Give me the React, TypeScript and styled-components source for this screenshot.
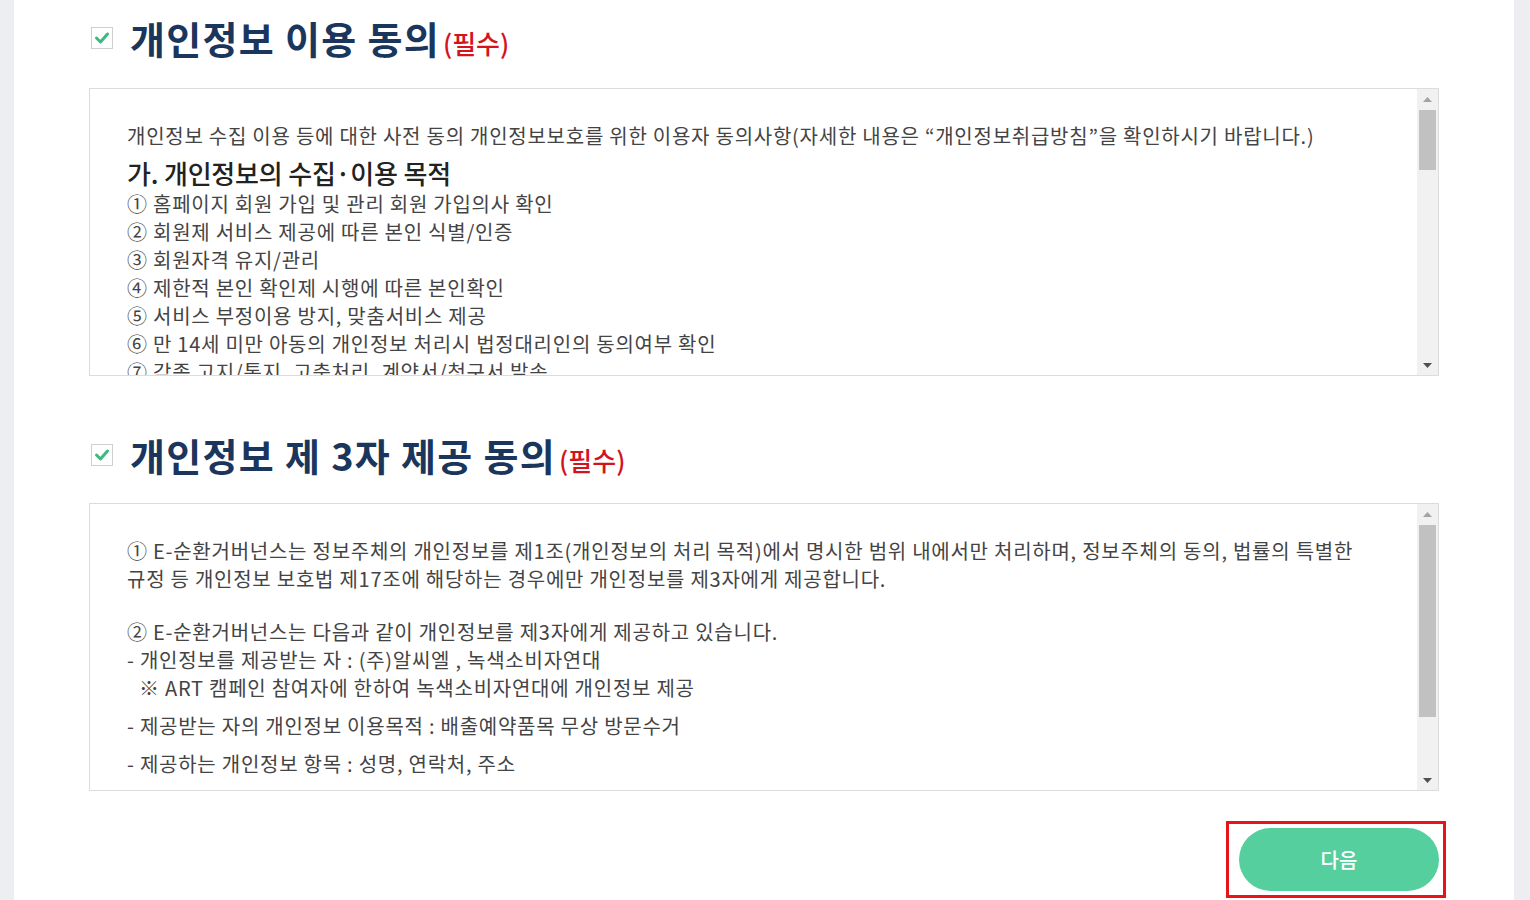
import React from "react";
import styled, { createGlobalStyle } from "styled-components";

const Global = createGlobalStyle`
  html, body { margin: 0; padding: 0; }
  body {
    background: #eceef2;
    font-family: "Noto Sans CJK KR", "Noto Sans", sans-serif;
    overflow: hidden;
  }
`;

const Page = styled.div`
  width: 1500px;
  margin-left: 14px;
  min-height: 100vh;
  background: #ffffff;
`;

const Container = styled.div`
  width: 1350px;
  margin-left: 75px;
  display: flex;
  flex-direction: column;
`;

const TitleRow = styled.div<{ $top: number; $bottom: number }>`
  display: flex;
  align-items: center;
  height: 76px;
  margin-top: ${(p) => p.$top}px;
  margin-bottom: ${(p) => p.$bottom}px;
`;

const CheckBox = styled.span`
  width: 22px;
  height: 22px;
  box-sizing: border-box;
  border: 1px solid #cfcfcf;
  background: #fff;
  display: flex;
  align-items: center;
  justify-content: center;
  margin-left: 2px;
  margin-right: 17px;
`;

const Title = styled.h2`
  margin: 0;
  display: flex;
  align-items: baseline;
  gap: 3px;
  font-size: 38px;
  font-weight: 700;
  color: #1b365d;
  line-height: 1;
  letter-spacing: 1.3px;
`;

const Required = styled.span`
  font-size: 26px;
  font-weight: 500;
  color: #d4141c;
  letter-spacing: 0;
`;

const Box = styled.div`
  height: 288px;
  box-sizing: border-box;
  border: 1px solid #dcdcdc;
  display: flex;
`;

const Content = styled.div`
  flex: 1;
  overflow: hidden;
  padding: 33px 20px 0 37px;
  color: #444;
  font-size: 20px;
  line-height: 28px;
  letter-spacing: 0.75px;
`;

const ScrollBar = styled.div`
  width: 21px;
  flex: none;
  background: #f1f1f1;
  display: flex;
  flex-direction: column;
`;

const ArrowButton = styled.div`
  height: 20px;
  flex: none;
  display: flex;
  align-items: center;
  justify-content: center;
`;

const Track = styled.div`
  flex: 1;
  display: flex;
  flex-direction: column;
  padding: 0 2px;
`;

const Thumb = styled.div<{ $offset: number; $size: number }>`
  margin-top: ${(p) => p.$offset}px;
  height: ${(p) => p.$size}px;
  background: #c1c1c1;
`;

const Line = styled.div<{ $mt?: number; $indent?: number }>`
  margin-top: ${(p) => p.$mt ?? 0}px;
  padding-left: ${(p) => p.$indent ?? 0}px;
  white-space: nowrap;
`;

const Heading = styled.div`
  margin-top: 6px;
  font-size: 26px;
  line-height: 34px;
  color: #222;
  font-weight: 500;
  letter-spacing: -0.2px;
`;

const ButtonRow = styled.div`
  display: flex;
  justify-content: flex-end;
  margin-top: 30px;
  margin-right: -7px;
`;

const Highlight = styled.div`
  border: 3px solid #e8141c;
  padding: 4px 4px 4px 10px;
`;

const NextButton = styled.button`
  width: 200px;
  height: 63px;
  border: none;
  border-radius: 32px;
  background: #55cf9e;
  color: #fff;
  font-family: "Noto Sans CJK KR", sans-serif;
  font-size: 20px;
  font-weight: 500;
  cursor: pointer;
  display: block;
`;

const Check = () => (
  <svg width="16" height="14" viewBox="0 0 16 14">
    <polyline
      points="2.5,7 6.5,11 13.5,3"
      fill="none"
      stroke="#3db87e"
      strokeWidth="3"
      strokeLinecap="round"
      strokeLinejoin="round"
    />
  </svg>
);

const Arrow = ({ up, color }: { up?: boolean; color: string }) => (
  <svg width="9" height="5" viewBox="0 0 9 5">
    <polygon points={up ? "0,5 9,5 4.5,0" : "0,0 9,0 4.5,5"} fill={color} />
  </svg>
);

const FakeScroll = ({ offset, size }: { offset: number; size: number }) => (
  <ScrollBar>
    <ArrowButton>
      <Arrow up color="#a3a3a3" />
    </ArrowButton>
    <Track>
      <Thumb $offset={offset} $size={size} />
    </Track>
    <ArrowButton>
      <Arrow color="#505050" />
    </ArrowButton>
  </ScrollBar>
);

const purposeItems = [
  "① 홈페이지 회원 가입 및 관리 회원 가입의사 확인",
  "② 회원제 서비스 제공에 따른 본인 식별/인증",
  "③ 회원자격 유지/관리",
  "④ 제한적 본인 확인제 시행에 따른 본인확인",
  "⑤ 서비스 부정이용 방지, 맞춤서비스 제공",
  "⑥ 만 14세 미만 아동의 개인정보 처리시 법정대리인의 동의여부 확인",
  "⑦ 각종 고지/통지, 고충처리, 계약서/청구서 발송",
];

export default function App() {
  return (
    <>
      <Global />
      <Page>
        <Container>
          <TitleRow $top={0} $bottom={12}>
            <CheckBox>
              <Check />
            </CheckBox>
            <Title>
              개인정보 이용 동의<Required>(필수)</Required>
            </Title>
          </TitleRow>
          <Box>
            <Content>
              <Line>
                개인정보 수집 이용 등에 대한 사전 동의 개인정보보호를 위한 이용자 동의사항(자세한 내용은 “개인정보취급방침”을 확인하시기 바랍니다.)
              </Line>
              <Heading>가. 개인정보의 수집·이용 목적</Heading>
              {purposeItems.map((t) => (
                <Line key={t}>{t}</Line>
              ))}
            </Content>
            <FakeScroll offset={1} size={60} />
          </Box>

          <TitleRow $top={41} $bottom={10}>
            <CheckBox>
              <Check />
            </CheckBox>
            <Title>
              개인정보 제 3자 제공 동의<Required>(필수)</Required>
            </Title>
          </TitleRow>
          <Box>
            <Content>
              <Line>
                ① E-순환거버넌스는 정보주체의 개인정보를 제1조(개인정보의 처리 목적)에서 명시한 범위 내에서만 처리하며, 정보주체의 동의, 법률의 특별한
              </Line>
              <Line>규정 등 개인정보 보호법 제17조에 해당하는 경우에만 개인정보를 제3자에게 제공합니다.</Line>
              <Line $mt={25}>② E-순환거버넌스는 다음과 같이 개인정보를 제3자에게 제공하고 있습니다.</Line>
              <Line>- 개인정보를 제공받는 자 : (주)알씨엘 , 녹색소비자연대</Line>
              <Line $indent={12}>※ ART 캠페인 참여자에 한하여 녹색소비자연대에 개인정보 제공</Line>
              <Line $mt={10}>- 제공받는 자의 개인정보 이용목적 : 배출예약품목 무상 방문수거</Line>
              <Line $mt={10}>- 제공하는 개인정보 항목 : 성명, 연락처, 주소</Line>
            </Content>
            <FakeScroll offset={1} size={192} />
          </Box>

          <ButtonRow>
            <Highlight>
              <NextButton type="button">다음</NextButton>
            </Highlight>
          </ButtonRow>
        </Container>
      </Page>
    </>
  );
}
